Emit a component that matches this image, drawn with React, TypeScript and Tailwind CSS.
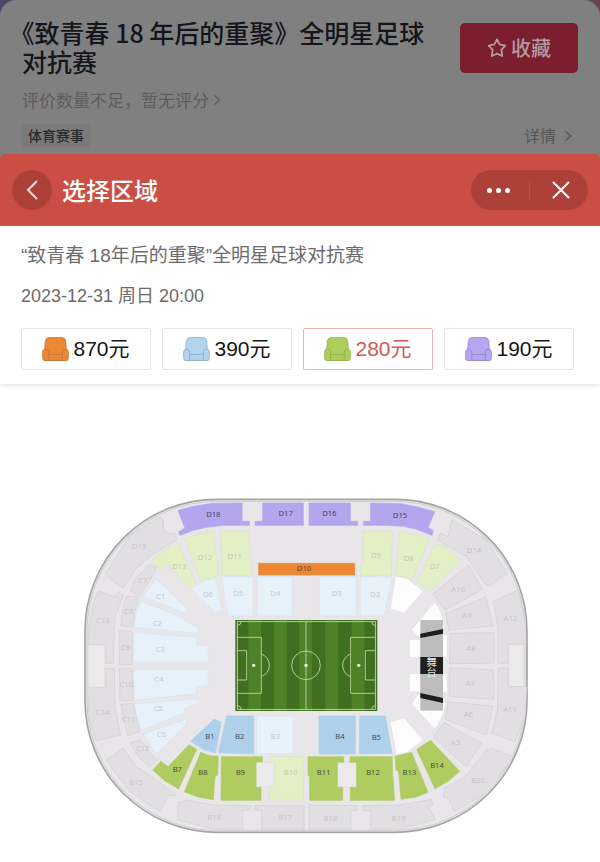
import { useState } from 'react'
import type { JSX } from 'react'

type Tone = 'purple' | 'lime' | 'green' | 'sky' | 'blue' | 'grey' | 'orange'

interface Area {
  id: string
  tone: Tone
  points: string
  x: number
  y: number
}

interface Stand {
  name: string
  origin: string
  areas: Area[]
}

const areaStyles: Record<Tone, string> = {
  purple: 'fill-[#b3a5ee] stroke-[#b3a5ee]',
  lime: 'fill-[#e5efc6] stroke-[#dbe3c8]',
  green: 'fill-[#afcc60] stroke-[#afcc60]',
  sky: 'fill-[#e7f1fa] stroke-[#d9e4ee]',
  blue: 'fill-[#afd0ea] stroke-[#afd0ea]',
  grey: 'fill-[#e2dfe3] stroke-[#d2cfd4]',
  orange: 'fill-[#ec8834] stroke-[#ec8834]',
}

const labelStyles: Record<Tone, string> = {
  purple: 'fill-[#4b4562]',
  lime: 'fill-[#c2c9b0]',
  green: 'fill-[#4a5530]',
  sky: 'fill-[#c0cad3]',
  blue: 'fill-[#44515c]',
  grey: 'fill-[#c6c3c9]',
  orange: 'fill-[#6b3c14]',
}

const stands: Stand[] = [
  {
    name: 'north-west',
    origin: 'translate(0 0)',
    areas: [
      { id: 'D18', tone: 'purple', x: 400, y: 73, points: '294,61 345,48 400,40 486,39 486,94 508,94 508,106 430,106 380,112 340,121 300,136 296,125 315,115' },
      { id: 'D17', tone: 'purple', x: 617, y: 70, points: '548,39 670,39 670,106 525,106 525,94 548,94' },
      { id: 'D19', tone: 'grey', x: 177, y: 170, points: '78,250 150,135 240,82 250,90 250,115 262,130 285,130 290,150 215,195 165,240 130,293 100,275' },
      { id: 'D13', tone: 'lime', x: 298, y: 230, points: '217,209 255,180 296,159 347,280 330,292 262,223 240,244' },
      { id: 'D12', tone: 'lime', x: 375, y: 203, points: '316,146 355,132 400,124 405,190 412,196 414,258 392,262 362,273' },
      { id: 'D11', tone: 'lime', x: 464, y: 199, points: '422,124 508,124 510,220 516,225 516,257 426,257' },
      { id: 'D6', tone: 'sky', x: 384, y: 313, points: '333,297 370,275 406,264 426,358 408,370' },
      { id: 'D5', tone: 'sky', x: 474, y: 310, points: '426,260 520,260 520,378 444,378' },
      { id: 'D4', tone: 'sky', x: 586, y: 310, points: '532,260 636,260 636,378 532,378' },
      { id: 'C7', tone: 'grey', x: 188, y: 270, points: '210,222 228,232 226,245 178,318 152,302 165,268' },
      { id: 'C8', tone: 'grey', x: 146, y: 365, points: '140,318 175,322 163,370 158,412 122,408 128,360' },
      { id: 'C9', tone: 'grey', x: 136, y: 472, points: '118,422 157,424 156,524 118,524' },
      { id: 'C13', tone: 'grey', x: 68, y: 390, points: '55,303 105,322 115,305 130,315 105,380 100,520 77,520 77,463 25,463 25,420 40,340' },
      { id: 'C1', tone: 'sky', x: 242, y: 320, points: '190,320 228,266 320,355 320,371' },
      { id: 'C2', tone: 'sky', x: 232, y: 399, points: '163,412 168,370 183,334 310,384 314,395 355,410 353,430' },
      { id: 'C3', tone: 'sky', x: 240, y: 479, points: '161,428 348,442 350,466 385,468 385,517 161,517' },
      { id: 'D10', tone: 'orange', x: 672, y: 236, points: '536,220 824,220 824,255 536,255' },
    ],
  },
  {
    name: 'north-east',
    origin: 'translate(660 0)',
    areas: [
      { id: 'D16', tone: 'purple', x: 88, y: 70, points: '27,39 151,39 151,94 173,94 173,106 27,106' },
      { id: 'D15', tone: 'purple', x: 300, y: 76, points: '212,39 300,41 350,50 404,65 384,113 400,122 396,136 350,118 310,109 260,106 190,106 190,94 212,94' },
      { id: 'D14', tone: 'grey', x: 522, y: 181, points: '455,90 560,150 620,250 565,290 550,275 500,200 412,150 420,130 445,140' },
      { id: 'D9', tone: 'lime', x: 228, y: 197, points: '190,124 277,124 274,257 182,257 182,225 190,220' },
      { id: 'D8', tone: 'lime', x: 326, y: 206, points: '298,126 345,132 386,148 336,270 310,260 287,258' },
      { id: 'D7', tone: 'lime', x: 404, y: 230, points: '407,159 445,178 482,210 392,302 350,275' },
      { id: 'D3', tone: 'sky', x: 110, y: 310, points: '59,260 168,260 168,378 59,378' },
      { id: 'D2', tone: 'sky', x: 226, y: 313, points: '182,260 277,262 252,378 182,378' },
      { id: 'A10', tone: 'grey', x: 474, y: 298, points: '398,312 505,225 548,298 435,360' },
    ],
  },
  {
    name: 'east',
    origin: 'translate(930 240)',
    areas: [
      { id: 'A9', tone: 'grey', x: 231, y: 137, points: '166,132 288,80 308,168 177,180' },
      { id: 'A8', tone: 'grey', x: 243, y: 234, points: '182,190 312,188 312,279 178,282' },
      { id: 'A7', tone: 'grey', x: 241, y: 339, points: '178,293 310,300 312,388 178,380' },
      { id: 'A6', tone: 'grey', x: 235, y: 434, points: '174,395 308,408 290,495 165,448' },
      { id: 'A12', tone: 'grey', x: 362, y: 146, points: '310,95 385,60 405,150 408,222 355,222 355,280 325,280 325,180' },
      { id: 'A11', tone: 'grey', x: 360, y: 419, points: '325,295 355,295 355,350 410,350 405,440 375,515 305,490 322,420' },
    ],
  },
  {
    name: 'west',
    origin: 'translate(0 360)',
    areas: [
      { id: 'C14', tone: 'grey', x: 68, y: 306, points: '77,176 103,176 105,290 122,375 48,392 28,330 22,233 77,233' },
    ],
  },
  {
    name: 'south-west',
    origin: 'translate(0 510)',
    areas: [
      { id: 'C4', tone: 'sky', x: 236, y: 57, points: '161,29 385,29 385,78 350,80 348,101 163,121' },
      { id: 'C5', tone: 'sky', x: 234, y: 145, points: '163,132 350,117 357,127 314,145 312,158 186,210 170,170' },
      { id: 'C6', tone: 'sky', x: 245, y: 224, points: '190,222 320,177 320,192 229,281' },
      { id: 'C10', tone: 'grey', x: 139, y: 72, points: '118,26 157,26 159,121 120,122' },
      { id: 'C11', tone: 'grey', x: 146, y: 178, points: '122,133 160,130 178,215 142,228' },
      { id: 'C12', tone: 'grey', x: 188, y: 265, points: '150,248 182,240 230,302 210,322 175,290' },
      { id: 'B1', tone: 'blue', x: 390, y: 230, points: '332,244 402,177 424,187 406,280 370,268' },
      { id: 'B2', tone: 'blue', x: 479, y: 230, points: '440,168 521,168 521,282 415,278' },
      { id: 'B3', tone: 'sky', x: 586, y: 230, points: '529,168 640,168 640,281 529,281' },
      { id: 'B7', tone: 'green', x: 292, y: 327, points: '218,330 242,304 264,320 327,254 350,268 296,387 255,363' },
      { id: 'B8', tone: 'green', x: 369, y: 338, points: '362,277 390,287 415,289 413,345 405,350 400,419 355,411 313,396' },
      { id: 'B9', tone: 'green', x: 481, y: 338, points: '424,290 547,290 547,306 528,306 528,382 543,382 543,421 423,421' },
      { id: 'B10', tone: 'lime', x: 632, y: 338, points: '568,290 672,290 670,421 568,421 568,382 584,382 584,308 568,308' },
      { id: 'B15', tone: 'grey', x: 168, y: 366, points: '78,300 130,265 170,320 215,350 290,405 262,408 240,455 150,395' },
      { id: 'B16', tone: 'grey', x: 402, y: 471, points: '295,428 320,420 400,435 510,437 510,450 488,450 488,508 400,506 292,480' },
      { id: 'B17', tone: 'grey', x: 615, y: 471, points: '525,437 672,437 672,508 545,508 545,452 525,450' },
    ],
  },
  {
    name: 'south-east',
    origin: 'translate(660 510)',
    areas: [
      { id: 'B4', tone: 'blue', x: 120, y: 230, points: '57,168 166,168 166,282 57,282' },
      { id: 'B5', tone: 'blue', x: 229, y: 232, points: '179,168 256,168 276,280 178,282' },
      { id: 'B11', tone: 'green', x: 71, y: 338, points: '24,290 131,290 131,307 112,307 112,382 128,382 128,421 29,421 29,350 24,345' },
      { id: 'B12', tone: 'green', x: 219, y: 336, points: '150,290 277,290 277,330 284,421 151,421 151,382 170,382 170,307 150,307' },
      { id: 'B13', tone: 'green', x: 328, y: 338, points: '286,289 335,277 384,397 345,412 303,418 296,335 288,330' },
      { id: 'B14', tone: 'green', x: 411, y: 317, points: '350,268 392,241 479,334 447,362 405,386' },
      { id: 'A5', tone: 'grey', x: 467, y: 247, points: '432,187 545,250 498,320 400,232' },
      { id: 'B18', tone: 'grey', x: 91, y: 474, points: '27,435 172,437 172,450 152,452 152,508 27,508' },
      { id: 'B19', tone: 'grey', x: 296, y: 474, points: '190,437 300,435 395,418 400,435 385,440 405,478 310,505 212,508 212,452 190,452' },
      { id: 'B20', tone: 'grey', x: 534, y: 361, points: '435,385 500,345 560,270 575,265 640,290 600,345 540,410 462,453 445,415 430,412' },
    ],
  },
]

const prices = [
  { price: 870, seat: 'fill-[#ee8733] stroke-[#b9763f]' },
  { price: 390, seat: 'fill-[#b3d3ef] stroke-[#86a9c6]' },
  { price: 280, seat: 'fill-[#afcd5a] stroke-[#8eaa4a]' },
  { price: 190, seat: 'fill-[#b5a5f3] stroke-[#8f82c4]' },
]

function SeatIcon({ className }: { className: string }): JSX.Element {
  return (
    <svg className={`w-[27px] h-6 shrink-0 ${className}`} viewBox="0 0 27 24" strokeWidth="0.7" aria-hidden="true">
      <path d="M2.5 15L3.2 4.5Q3.5 0.8 7 0.6Q13.5 0 20 0.6Q23.5 0.8 23.8 4.5L24.5 15V23.4H2.5Z" />
      <path d="M6 17.5H21V23.4H6Z" />
      <path d="M0.5 15Q0.5 12.2 3.6 12.2T6.7 15V23.5H2.5Q0.8 23.5 0.7 21.5Z" />
      <path d="M26.5 15Q26.5 12.2 23.4 12.2T20.3 15V23.5H24.5Q26.2 23.5 26.3 21.5Z" />
    </svg>
  )
}

function Chevron(): JSX.Element {
  return (
    <svg className="w-2 h-3" viewBox="0 0 8 12" fill="none" stroke="currentColor" strokeWidth="1.4" aria-hidden="true">
      <path d="M1.5 1.5L6.5 6L1.5 10.5" />
    </svg>
  )
}

function Pitch(): JSX.Element {
  return (
    <g>
      <rect x="466" y="390" width="426" height="273" fill="#40701f" />
      {[505, 582, 658, 736, 815].map(x => (
        <rect key={x} x={x} y="390" width="38" height="273" fill="#4f8128" />
      ))}
      <g fill="none" stroke="#cfe0b4" strokeWidth="2.4">
        <rect x="472" y="395" width="414" height="263" />
        <path d="M678 395V658" />
        <circle cx="678" cy="526" r="43" />
        <path d="M472 442H544V610H472M472 482H500V570H472M544 492A36 36 0 0 1 544 560" />
        <path d="M886 442H812V610H886M886 482H856V570H886M812 492A36 36 0 0 0 812 560" />
        <path d="M472 406A11 11 0 0 0 483 395M886 406A11 11 0 0 1 875 395M472 647A11 11 0 0 1 483 658M886 647A11 11 0 0 0 875 658" />
      </g>
      <g fill="#f2fbe0">
        <circle cx="521" cy="526" r="5" />
        <circle cx="678" cy="526" r="5" />
        <circle cx="836" cy="526" r="5" />
      </g>
    </g>
  )
}

function Stage(): JSX.Element {
  return (
    <g transform="translate(930 240)">
      <g fill="#fdfdfd">
        <path d="M18 20L50 26L98 63L42 128L2 116Z" />
        <path d="M134 98Q158 130 164 176L86 200L66 180Z" />
        <path d="M60 210H92V261H60Z" />
        <path d="M60 312H92V364H60Z" />
        <path d="M66 402L84 374L166 400Q158 445 134 476Z" />
        <path d="M2 457L42 445L98 510L50 547L20 552Z" />
        <path d="M158 196H170V261H158ZM158 312H170V366H158Z" />
      </g>
      <rect x="91" y="150" width="68" height="272" fill="#bebdbe" />
      <rect x="91" y="261" width="68" height="51" fill="#1f1f20" />
      <path d="M91 191L159 177V191L91 204ZM91 369L159 384V399L91 384Z" fill="#1f1f20" />
      <text
        x="125"
        y="291"
        textAnchor="middle"
        className="fill-[#e8e8e8] text-[31px] font-['Noto_Sans_CJK_SC',sans-serif] [writing-mode:vertical-rl]"
      >
        舞台
      </text>
    </g>
  )
}

function VenueMap(): JSX.Element {
  return (
    <svg className="block w-full" viewBox="-240 -318 1800 1434" role="img" aria-label="座位区域图">
      <rect x="15" y="28" width="1326" height="999" rx="395" fill="#e8e6e8" stroke="#a5a5a5" strokeWidth="5" />
      <rect x="21" y="34" width="1314" height="987" rx="389" fill="none" stroke="#cfcecf" strokeWidth="3" />
      {/* Gangways */}
      <g fill="#ebe9ea" stroke="#dddbde" strokeWidth="2">
        <path d="M25 465H75V591H25Z" />
        <path d="M1286 464H1332V590H1286Z" />
        <path d="M528 816H584V892H528Z" />
        <path d="M772 817H830V892H772Z" />
      </g>
      {stands.map(stand => (
        <g key={stand.name} transform={stand.origin}>
          {stand.areas.map(area => (
            <g key={area.id}>
              <polygon points={area.points} className={areaStyles[area.tone]} strokeWidth="2" strokeLinejoin="round" />
              <text
                x={area.x}
                y={area.y + 8}
                textAnchor="middle"
                className={`text-[23px] font-['Noto_Sans',sans-serif] ${labelStyles[area.tone]}`}
              >
                {area.id}
              </text>
            </g>
          ))}
        </g>
      ))}
      <Pitch />
      <Stage />
    </svg>
  )
}

export default function App(): JSX.Element {
  const [selected, setSelected] = useState(280)

  return (
    <div className="min-h-screen bg-white font-['Liberation_Sans','Noto_Sans_CJK_SC',sans-serif]">
      {/* Dimmed event page */}
      <div className="bg-linear-to-r from-[#4b4766] via-[#6d5a5c] to-[#6b4450] font-['Noto_Sans_CJK_SC',sans-serif]">
        <div className="rounded-t-[16px] bg-[#808080] px-[22px] pt-[18px] pb-[7px]">
          <div className="flex items-start justify-between gap-6">
            <h1 className="flex-1 text-[25px] leading-[29px] font-medium text-[#14161c] [text-spacing-trim:trim-start]">
              《致青春 18 年后的重聚》全明星足球对抗赛
            </h1>
            <button
              type="button"
              className="mt-[5px] flex h-[50px] w-[118px] items-center justify-center gap-1 rounded-[5px] bg-[#7b1e2e] text-[20px] font-medium text-[#b39aa0]"
            >
              <svg className="size-5" viewBox="0 0 20 20" fill="none" stroke="currentColor" strokeWidth="1.8" strokeLinejoin="round" aria-hidden="true">
                <path d="M10 1.5L12.6 6.4L18.3 7.6L14.4 11.8L15.2 18L10 15.6L4.8 18L5.6 11.8L1.7 7.6L7.4 6.4Z" />
              </svg>
              收藏
            </button>
          </div>
          <a href="#rating" className="mt-3 flex w-fit items-center gap-1 text-[17px] leading-6 text-[#5c5c5e]">
            评价数量不足，暂无评分
            <Chevron />
          </a>
          <div className="mt-3 flex items-center justify-between">
            <span className="rounded-[2px] bg-[#7a7a7a] px-[6px] text-[14px] leading-[23px] font-medium text-[#28292d]">
              体育赛事
            </span>
            <a href="#detail" className="flex items-center gap-2 pr-[6px] text-[16px] leading-[23px] text-[#555557]">
              详情
              <Chevron />
            </a>
          </div>
        </div>
      </div>

      {/* Title bar */}
      <div className="bg-[#808080]">
        <header className="flex h-[72px] items-center gap-[10px] rounded-t-[5px] bg-[#ca4e44] px-3 text-white">
          <button type="button" aria-label="返回" className="flex size-10 items-center justify-center rounded-full bg-[#ad4039]">
            <svg className="w-3 h-5" viewBox="0 0 12 20" fill="none" stroke="#f4dcd9" strokeWidth="2" aria-hidden="true">
              <path d="M11 1L2 10L11 19" />
            </svg>
          </button>
          <h2 className="flex-1 text-[24px] leading-8 font-medium font-['Noto_Sans_CJK_SC',sans-serif]">选择区域</h2>
          <div className="flex h-10 w-[117px] items-center rounded-full bg-[#ad4039]">
            <button type="button" aria-label="更多" className="flex h-10 flex-1 items-center justify-center gap-1 pr-1">
              <span className="size-[5px] rounded-full bg-white" />
              <span className="size-[5px] rounded-full bg-white" />
              <span className="size-[5px] rounded-full bg-white" />
            </button>
            <span className="h-5 w-px bg-[#b64e47]" />
            <button type="button" aria-label="关闭" className="flex h-10 flex-1 items-center justify-center pl-1">
              <svg className="size-[18px]" viewBox="0 0 18 18" fill="none" stroke="currentColor" strokeWidth="2" strokeLinecap="round" aria-hidden="true">
                <path d="M1.5 1.5L16.5 16.5M16.5 1.5L1.5 16.5" />
              </svg>
            </button>
          </div>
        </header>
      </div>

      {/* Session and prices */}
      <section className="bg-white pt-4 pb-[14px] pl-[21px] pr-[26px] shadow-[0_2px_3px_#e6e6e6]">
        <p className="text-[19px] leading-7 text-[#6c6c6c]">“致青春 18年后的重聚”全明星足球对抗赛</p>
        <p className="mt-[14px] text-[18px] leading-6 text-[#6c6c6c]">2023-12-31 周日 20:00</p>
        <div className="mt-5 grid grid-cols-4 gap-[11px]">
          {prices.map(({ price, seat }) => (
            <button
              key={price}
              type="button"
              aria-pressed={selected === price}
              onClick={() => setSelected(price)}
              className={`flex h-[42px] items-center justify-center gap-1 rounded-[2px] border text-[21px] ${
                selected === price ? 'border-[#ebb5b2] text-[#cf5a53]' : 'border-[#e6e6e6] text-[#161616]'
              }`}
            >
              <SeatIcon className={seat} />
              {price}元
            </button>
          ))}
        </div>
      </section>

      {/* Venue */}
      <main>
        <VenueMap />
      </main>
    </div>
  )
}
